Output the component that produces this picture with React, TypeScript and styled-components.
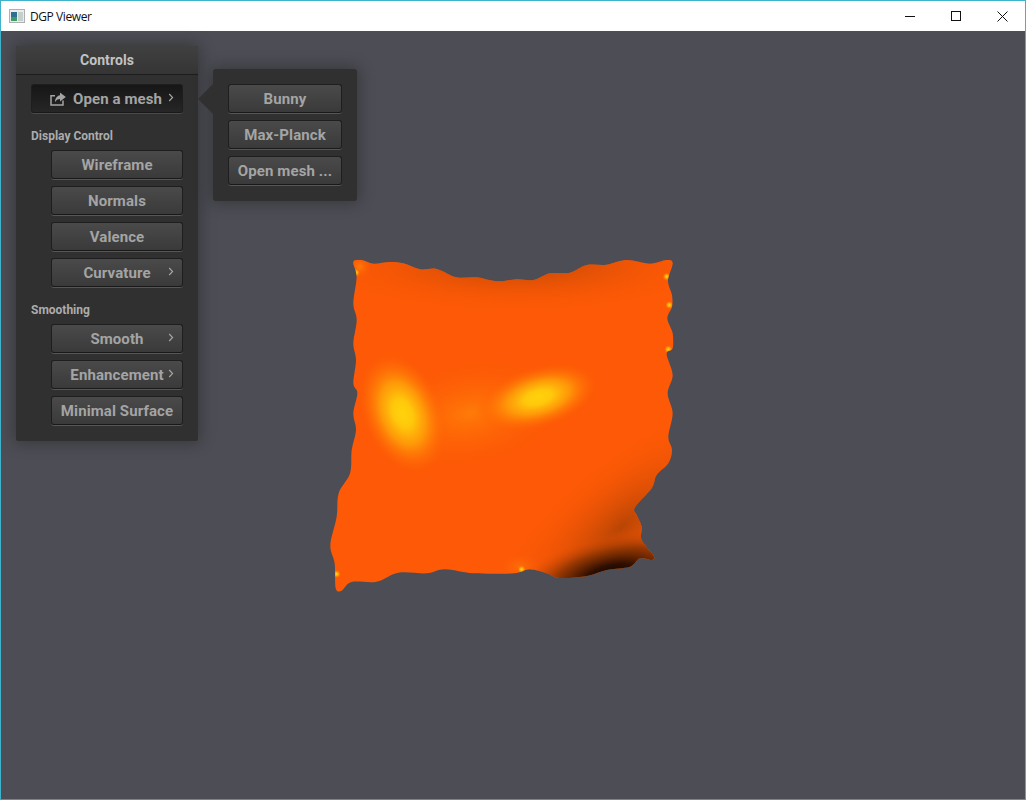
import styled, { createGlobalStyle } from 'styled-components';

const GlobalStyle = createGlobalStyle`
  html, body { margin: 0; padding: 0; height: 100%; background: #4d4d55; }
  #root { height: 100%; }
`;

const Window = styled.div`
  box-sizing: border-box;
  width: 1026px;
  height: 800px;
  display: flex;
  flex-direction: column;
  border: 1px solid #3fb2cc;
  border-bottom-color: #5a8f9e;
  overflow: hidden;
`;

const TitleBar = styled.header`
  height: 30px;
  flex: none;
  display: flex;
  align-items: center;
  background: #fff;
`;

const AppIcon = styled.svg`
  width: 16px;
  height: 14px;
  margin: 0 5px 0 8px;
`;

const Title = styled.span`
  font: 12px 'Open Sans', 'Noto Sans', sans-serif;
  letter-spacing: -0.42px;
  color: #111;
  flex: 1;
`;

const WinButton = styled.button`
  width: 46px;
  height: 30px;
  padding: 0;
  border: 0;
  background: none;
  display: flex;
  align-items: center;
  justify-content: center;
`;

const Canvas = styled.main`
  position: relative;
  flex: 1;
  background: #4d4d55;
`;

const MeshSvg = styled.svg`
  position: absolute;
  left: 319px;
  top: 219px;
  width: 370px;
  height: 350px;
`;

const Panel = styled.section`
  position: absolute;
  left: 15px;
  top: 15px;
  width: 182px;
  height: 395px;
  background: #303030;
  border-radius: 2px;
  box-shadow: 0 0 16px 2px rgba(0, 0, 0, 0.3);
  font-family: Roboto, 'Liberation Sans', sans-serif;
`;

const PanelHeader = styled.h2`
  margin: 0;
  height: 28px;
  line-height: 28px;
  text-align: center;
  font-size: 14px;
  font-weight: 700;
  letter-spacing: 0.1px;
  color: #c2c2c2;
  background: linear-gradient(#404040, #353535);
  border-bottom: 1px solid #1c1c1c;
  border-radius: 2px 2px 0 0;
`;

const PanelBody = styled.div`
  display: flex;
  flex-direction: column;
  gap: 7px;
  padding: 9px 15px 15px;
`;

const Indented = styled.div`
  display: flex;
  flex-direction: column;
  gap: 7px;
  padding-left: 20px;
`;

const GroupLabel = styled.div`
  height: 16px;
  margin-top: 8px;
  margin-bottom: -1px;
  line-height: 16px;
  font-size: 12px;
  font-weight: 700;
  color: #acacac;
`;

const Button = styled.button<{ $pressed?: boolean }>`
  position: relative;
  box-sizing: border-box;
  height: 29px;
  width: 100%;
  padding: 0;
  display: flex;
  align-items: center;
  justify-content: center;
  gap: 7px;
  font-family: Roboto, 'Liberation Sans', sans-serif;
  font-size: 15px;
  font-weight: 700;
  letter-spacing: 0.1px;
  color: #a4a4a4;
  white-space: nowrap;
  border: 1px solid #1e1e1e;
  border-bottom-color: #191919;
  border-radius: 3px;
  background: ${(p) =>
    p.$pressed ? 'linear-gradient(#161616, #262626)' : 'linear-gradient(#4a4a4a, #3a3a3a)'};
  box-shadow: 0 1px 0 ${(p) => (p.$pressed ? '#4a4a4a' : '#565656')};
`;

const Chevron = styled.svg`
  position: absolute;
  right: 8px;
  top: 8px;
  width: 6px;
  height: 9px;
`;

const ShareIcon = styled.svg`
  width: 16px;
  height: 14px;
  flex: none;
  margin-left: -2px;
`;

const Popup = styled.section`
  position: absolute;
  left: 212px;
  top: 38px;
  width: 144px;
  height: 132px;
  box-sizing: border-box;
  padding: 15px;
  display: flex;
  flex-direction: column;
  gap: 7px;
  background: #303030;
  border-radius: 3px;
  box-shadow: 0 0 16px 2px rgba(0, 0, 0, 0.3);

  &::before {
    content: '';
    position: absolute;
    left: -15px;
    top: 15px;
    border-style: solid;
    border-width: 15px 15px 15px 0;
    border-color: transparent #303030 transparent transparent;
  }
`;

const outline: [number, number][] = [
  [100, 36], [125, 30], [160, 41], [210, 36], [250, 40], [300, 58], [350, 57], [410, 82],
  [470, 82], [530, 94], [590, 88], [640, 90], [690, 70], [750, 68], [800, 45], [860, 44],
  [920, 30], [990, 41], [1040, 30], [1058, 40], [1044, 92], [1056, 135], [1056, 170],
  [1042, 205], [1058, 250], [1058, 295], [1040, 312], [1058, 375], [1043, 430], [1058, 490],
  [1045, 560], [1056, 600], [1045, 640], [1010, 675], [995, 715], [945, 772], [950, 795],
  [965, 830], [965, 870], [1001, 918], [995, 930], [960, 925], [930, 950], [860, 960],
  [800, 978], [720, 984], [680, 970], [630, 958], [580, 970], [460, 970], [375, 958],
  [320, 970], [235, 968], [170, 995], [95, 996], [65, 1022], [47, 1015], [44, 940],
  [31, 885], [50, 800], [56, 730], [90, 670], [95, 600], [108, 540], [100, 490], [112, 430],
  [100, 400], [108, 330], [100, 280], [110, 210], [100, 160], [110, 80],
];

// closed Catmull-Rom through the traced silhouette
const meshPath = () => {
  const n = outline.length;
  let d = `M${outline[0][0]} ${outline[0][1]}`;
  for (let i = 0; i < n; i++) {
    const [p0, p1, p2, p3] = [
      outline[(i + n - 1) % n],
      outline[i],
      outline[(i + 1) % n],
      outline[(i + 2) % n],
    ];
    d += `C${p1[0] + (p2[0] - p0[0]) / 6} ${p1[1] + (p2[1] - p0[1]) / 6} ${p2[0] - (p3[0] - p1[0]) / 6} ${p2[1] - (p3[1] - p1[1]) / 6} ${p2[0]} ${p2[1]}`;
  }
  return d + 'Z';
};

const sparks: [number, number][] = [
  [108, 68], [1040, 80], [1048, 165], [1045, 298], [50, 972], [605, 958],
];

const Mesh = () => (
  <MeshSvg viewBox="0 0 1110 1050" shapeRendering="crispEdges">
    <defs>
      <clipPath id="mesh-clip">
        <path d={meshPath()} />
      </clipPath>
      <radialGradient id="hot">
        <stop offset="0" stopColor="#ffd20c" />
        <stop offset="0.22" stopColor="#ffc80b" />
        <stop offset="0.5" stopColor="#ff9e08" stopOpacity="0.9" />
        <stop offset="0.76" stopColor="#ff7806" stopOpacity="0.5" />
        <stop offset="1" stopColor="#ff5a05" stopOpacity="0" />
      </radialGradient>
      <radialGradient id="warm">
        <stop offset="0" stopColor="#ff8a08" stopOpacity="0.7" />
        <stop offset="1" stopColor="#ff5a05" stopOpacity="0" />
      </radialGradient>
      <radialGradient id="shade">
        <stop offset="0" stopColor="#0c0400" />
        <stop offset="0.25" stopColor="#300f00" />
        <stop offset="0.6" stopColor="#8a3302" stopOpacity="0.85" />
        <stop offset="1" stopColor="#e04f04" stopOpacity="0" />
      </radialGradient>
      <radialGradient id="dim">
        <stop offset="0" stopColor="#b54404" stopOpacity="0.95" />
        <stop offset="1" stopColor="#ff5a05" stopOpacity="0" />
      </radialGradient>
      <radialGradient id="spark">
        <stop offset="0" stopColor="#ffe010" />
        <stop offset="0.45" stopColor="#ffb00a" stopOpacity="0.8" />
        <stop offset="1" stopColor="#ff5a05" stopOpacity="0" />
      </radialGradient>
    </defs>
    <g clipPath="url(#mesh-clip)">
      <rect width="1110" height="1050" fill="#fd5906" />
      <ellipse cx="590" cy="40" rx="620" ry="150" fill="url(#dim)" />
      <ellipse cx="905" cy="830" rx="500" ry="200" fill="url(#dim)" transform="rotate(-40 905 830)" />
      <ellipse cx="870" cy="975" rx="300" ry="120" fill="url(#shade)" transform="rotate(-14 870 975)" />
      <ellipse cx="450" cy="490" rx="300" ry="170" fill="url(#warm)" transform="rotate(-10 450 490)" />
      <ellipse cx="248" cy="490" rx="125" ry="195" fill="url(#hot)" transform="rotate(-22 248 490)" />
      <ellipse cx="655" cy="442" rx="190" ry="95" fill="url(#hot)" transform="rotate(-16 655 442)" />
      <ellipse cx="600" cy="950" rx="70" ry="45" fill="url(#warm)" opacity="0.6" />
      <ellipse cx="120" cy="50" rx="35" ry="35" fill="url(#warm)" />
      {sparks.map(([x, y]) => (
        <circle key={`${x}-${y}`} cx={x} cy={y} r="13" fill="url(#spark)" />
      ))}
    </g>
  </MeshSvg>
);

const More = () => (
  <Chevron viewBox="0 0 6 9">
    <path d="M1.2 1 L4.6 4.5 L1.2 8" fill="none" stroke="#a8a8a8" strokeWidth="1.1" />
  </Chevron>
);

export default function App() {
  return (
    <>
      <GlobalStyle />
      <Window>
        <TitleBar>
          <AppIcon viewBox="0 0 16 14">
            <rect x="0.5" y="0.5" width="15" height="13" fill="#ececec" stroke="#b0b0b0" />
            <rect x="2" y="3" width="6" height="5" fill="#2f6f8f" />
            <rect x="2" y="8" width="6" height="4" fill="#3f9a6a" />
            <rect x="9" y="3" width="5" height="9" fill="#c3d0cc" />
          </AppIcon>
          <Title>DGP Viewer</Title>
          <WinButton aria-label="Minimize">
            <svg width="10" height="10" viewBox="0 0 10 10">
              <path d="M0 5.5H10" stroke="#111" fill="none" />
            </svg>
          </WinButton>
          <WinButton aria-label="Maximize">
            <svg width="10" height="10" viewBox="0 0 10 10">
              <rect x="0.5" y="0.5" width="9" height="9" stroke="#111" fill="none" />
            </svg>
          </WinButton>
          <WinButton aria-label="Close">
            <svg width="11" height="11" viewBox="0 0 11 11">
              <path d="M0.5 0.5L10.5 10.5M10.5 0.5L0.5 10.5" stroke="#111" fill="none" />
            </svg>
          </WinButton>
        </TitleBar>
        <Canvas>
          <Mesh />
          <Panel>
            <PanelHeader>Controls</PanelHeader>
            <PanelBody>
              <Button $pressed>
                <ShareIcon viewBox="0 0 16 14">
                  <path d="M5 3.7H1V13H13V8.5" fill="none" stroke="#a4a4a4" strokeWidth="1.5" />
                  <path d="M10 0.5L15.8 5L10 9.5V7C7.8 7 6.2 8 5 10.2C5 6.4 7 3.6 10 3.2Z" fill="#a4a4a4" />
                </ShareIcon>
                Open a mesh
                <More />
              </Button>
              <GroupLabel>Display Control</GroupLabel>
              <Indented>
                <Button>Wireframe</Button>
                <Button>Normals</Button>
                <Button>Valence</Button>
                <Button>
                  Curvature
                  <More />
                </Button>
              </Indented>
              <GroupLabel>Smoothing</GroupLabel>
              <Indented>
                <Button>
                  Smooth
                  <More />
                </Button>
                <Button>
                  Enhancement
                  <More />
                </Button>
                <Button>Minimal Surface</Button>
              </Indented>
            </PanelBody>
          </Panel>
          <Popup>
            <Button>Bunny</Button>
            <Button>Max-Planck</Button>
            <Button>Open mesh ...</Button>
          </Popup>
        </Canvas>
      </Window>
    </>
  );
}
